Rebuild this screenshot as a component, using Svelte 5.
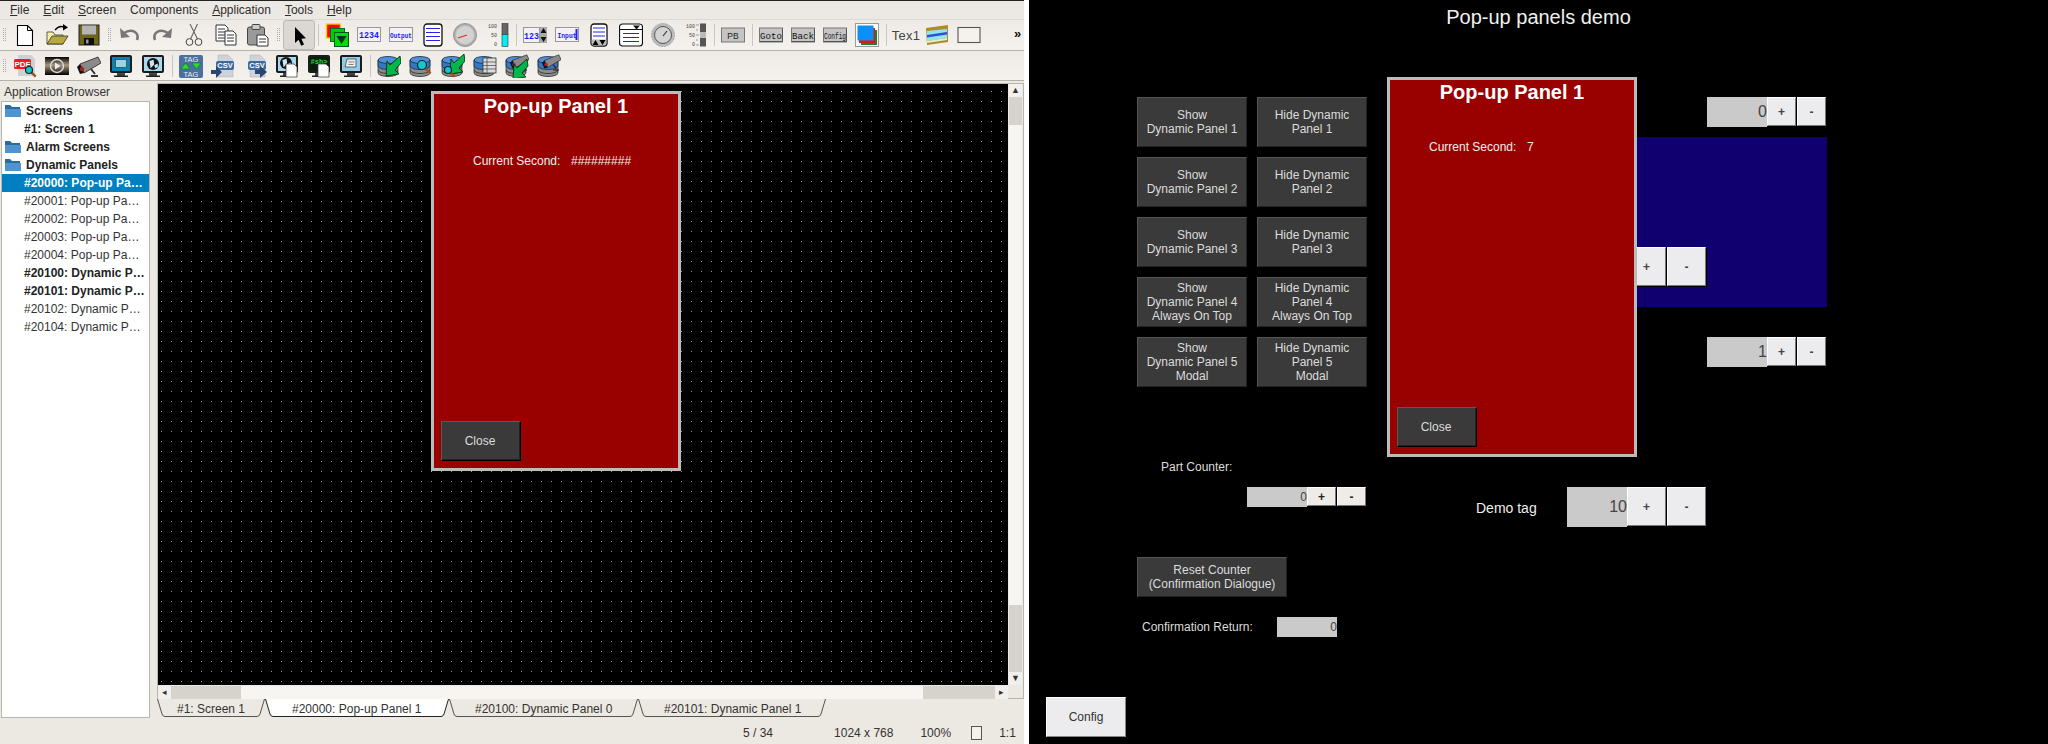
<script>
  const menus = [
    ['F', 'ile'], ['E', 'dit'], ['S', 'creen'], ['', 'Components'],
    ['A', 'pplication'], ['T', 'ools'], ['H', 'elp']
  ];

  const tree = [
    { label: 'Screens', folder: true },
    { label: '#1: Screen 1', bold: true },
    { label: 'Alarm Screens', folder: true },
    { label: 'Dynamic Panels', folder: true },
    { label: '#20000: Pop-up Pa…', bold: true, selected: true },
    { label: '#20001: Pop-up Pa…' },
    { label: '#20002: Pop-up Pa…' },
    { label: '#20003: Pop-up Pa…' },
    { label: '#20004: Pop-up Pa…' },
    { label: '#20100: Dynamic P…', bold: true },
    { label: '#20101: Dynamic P…', bold: true },
    { label: '#20102: Dynamic P…' },
    { label: '#20104: Dynamic P…' }
  ];

  const tabs = [
    { label: '#1: Screen 1', w: 108, pad: 20 },
    { label: '#20000: Pop-up Panel 1', w: 184, pad: 27 },
    { label: '#20100: Dynamic Panel 0', w: 189, pad: 26 },
    { label: '#20101: Dynamic Panel 1', w: 188, pad: 26 }
  ];
  tabs[1].active = true;

  function tabPath(w) {
    return `M0.5 0 L5 15 Q5.7 17.5 8 17.5 H${w - 8} Q${w - 5.7} 17.5 ${w - 5} 15 L${w - 0.5} 0`;
  }

  // the toolbar labels are squeezed into a 24px box, mono glyphs are 0.6em wide
  function squeeze(label, len, fs) {
    return len / (label.length * 0.6 * fs);
  }

  const buttonRows = [
    ['Show\nDynamic Panel 1', 'Hide Dynamic\nPanel 1'],
    ['Show\nDynamic Panel 2', 'Hide Dynamic\nPanel 2'],
    ['Show\nDynamic Panel 3', 'Hide Dynamic\nPanel 3'],
    ['Show\nDynamic Panel 4\nAlways On Top', 'Hide Dynamic\nPanel 4\nAlways On Top'],
    ['Show\nDynamic Panel 5\nModal', 'Hide Dynamic\nPanel 5\nModal']
  ];

  const spinners = [
    { x: 678, y: 97, h: 30, btn: 30, value: 0, size: 'mid' },
    { x: 678, y: 337, h: 30, btn: 30, value: 1, size: 'mid' },
    { x: 538, y: 247, h: 40, btn: 40, value: 0, size: 'mid' },
    { x: 538, y: 487, h: 40, btn: 40, value: 10, size: 'mid' },
    { x: 218, y: 487, h: 20, btn: 30, value: 0, size: 'small' }
  ];
</script>

{#snippet icon(body)}
  <span class="tool"><svg viewBox="0 0 24 24" width="24" height="24">{@render body()}</svg></span>
{/snippet}

{#snippet popup(value)}
  <div class="popup">
    <div class="popup-title">Pop-up Panel 1</div>
    <div class="popup-line"><span class="sec-label">Current Second:</span><span>{value}</span></div>
    <button class="dark close">Close</button>
  </div>
{/snippet}

{#snippet db()}
  <g transform="scale(1.1 1)">
    <path d="M1 6v13a9 3.5 0 0 0 18 0V6z" fill="#8c8c8c" stroke="#333" stroke-width=".8"/>
    <path d="M1 6v6a9 3.5 0 0 0 18 0V6z" fill="#3577c4" stroke="#234" stroke-width=".8"/>
    <path d="M1 16a9 3.5 0 0 0 18 0" fill="none" stroke="#333" stroke-width=".8"/>
    <ellipse cx="10" cy="6" rx="9" ry="3.5" fill="#4d8fd8" stroke="#234" stroke-width=".8"/>
  </g>
{/snippet}

{#snippet greenArrow(dx, dy)}
  <path transform="translate({dx} {dy})" d="M23 2 13 11 10 7 9 22 22 20 18 16 24 9z" fill="#00b84a" stroke="#020" stroke-width=".8"/>
{/snippet}

{#snippet lens(cx, cy, r)}
  <path d="M{cx + r * .7} {cy + r * .7} L{cx + r * 1.9} {cy + r * 1.9}" stroke="#a4501c" stroke-width="2.4"/>
  <circle {cx} {cy} {r} fill="#14c8c8" stroke="#123" stroke-width="1.2"/>
{/snippet}

{#snippet camera(dx, dy, s)}
  <g transform="translate({dx} {dy}) scale({s})">
    <path d="M3 8 21 1l3 6L7 17z" fill="#8a8a8a" stroke="#222" stroke-width=".8"/>
    <path d="M3 8 7 17 3 18 0 11z" fill="#111"/>
    <circle cx="5" cy="13" r="2.2" fill="#a22"/>
    <path d="M14 13 18 18M14 20h7" stroke="#333" stroke-width="2" fill="none"/>
  </g>
{/snippet}

{#snippet monitor(fill)}
  <rect x="1" y="1" width="22" height="18" rx="2" fill="#1c1c1c"/>
  <rect x="3" y="3" width="18" height="14" fill={fill}/>
  <rect x="8" y="19" width="8" height="3" fill="#444"/>
  <rect x="5" y="21.5" width="14" height="1.5" fill="#222"/>
{/snippet}

{#snippet globe(cx, cy, r)}
  <circle {cx} {cy} {r} fill="#111"/>
  <path d="M{cx - r * .6} {cy - r * .5}l{r * .7} {-r * .2} {r * .1} {r * .8} {-r * .6} {r * .6}z M{cx + r * .2} {cy + r * .2}l{r * .6} {-r * .3}v{r * .6}l{-r * .4} {r * .2}z" fill="#cde4f2"/>
{/snippet}

{#snippet minidoc()}
  <path d="M11 10h8l3 3v10H11z" fill="#fff" stroke="#333" stroke-width=".7"/>
{/snippet}

{#snippet csvDoc()}
  <path d="M7 1h10l5 5v17H7z" fill="#cfd3d8" stroke="#aab" stroke-width=".5"/>
  <rect x="5" y="7" width="18" height="9" rx="2" fill="#3c6a9c"/>
  <text x="14" y="14.3" text-anchor="middle" class="svg-bold" font-size="7.5" fill="#fff">CSV</text>
{/snippet}

{#snippet ioBox(label, len, fs)}
  <rect x=".5" y="4.5" width="23" height="14" fill="#f2f2f6" stroke="#999"/>
  <text transform="translate(12 15) scale({squeeze(label, len, fs)} 1)" text-anchor="middle" class="svg-mono" font-size={fs} fill="#1a1aee">{label}</text>
{/snippet}

{#snippet grayBtn(label)}
  <rect x=".5" y="5" width="23" height="14" fill="#c4c4c4" stroke="#777"/>
  <path d="M1 18.5H23.5V5.5" stroke="#555" fill="none"/>
  <text transform="translate(12 15.5) scale({squeeze(label, 22, 9)} 1)" text-anchor="middle" class="svg-mono-plain" font-size="9" fill="#111">{label}</text>
{/snippet}

{#snippet scale()}
  <text x="12" y="5" text-anchor="end" class="svg-mono-plain" font-size="5" fill="#444">100</text>
  <text x="12" y="14" text-anchor="end" class="svg-mono-plain" font-size="5" fill="#444">50</text>
  <text x="12" y="23" text-anchor="end" class="svg-mono-plain" font-size="5" fill="#444">0</text>
{/snippet}

{#snippet iNew()}
  <path d="M4.5 2.5h10l5 5v15h-15z" fill="#fff" stroke="#000" stroke-width="1.1"/><path d="M14.5 2.5v5h5" fill="none" stroke="#000"/>
{/snippet}
{#snippet iOpen()}
  <path d="M2 21V9h6l2 3h8v9z" fill="url(#dith)" stroke="#333" stroke-width=".8"/>
  <path d="M2 21l5-8h16l-5 8z" fill="#b8a93a" stroke="#333" stroke-width=".8"/>
  <path d="M10 7q4-5 9-3" fill="none" stroke="#000" stroke-width="1.4"/><path d="M18 1l5 3.5-5 3z" fill="#000"/>
{/snippet}
{#snippet iSave()}
  <rect x="2" y="2" width="20" height="20" fill="#6b6716" stroke="#222"/>
  <rect x="5" y="2.5" width="14" height="9" fill="#b4b4b4"/>
  <rect x="7" y="15" width="10" height="7" fill="#0c0c0c"/><rect x="9" y="16.5" width="2.5" height="4" fill="#999"/>
{/snippet}
{#snippet iUndo()}
  <path d="M6 10q6-4 11-1 4 3 2 8" fill="none" stroke="#777" stroke-width="2.6"/><path d="M2 5l1 10 9-1z" fill="#777"/>
{/snippet}
{#snippet iRedo()}
  <g transform="matrix(-1 0 0 1 24 0)">{@render iUndo()}</g>
{/snippet}
{#snippet iCut()}
  <path d="M8 1l7.5 15M15.5 1 8.5 16" stroke="#666" stroke-width="1.1" fill="none"/>
  <circle cx="7.5" cy="19" r="3.4" fill="none" stroke="#444"/><circle cx="16.5" cy="19" r="3.4" fill="none" stroke="#444"/>
{/snippet}
{#snippet iCopy()}
  <path d="M2 2h9l3 3v13H2z" fill="#fff" stroke="#333"/><path d="M4 6h7M4 9h7M4 12h7M4 15h7" stroke="#333"/>
  <path d="M11 8h8l3 3v11H11z" fill="#fff" stroke="#333"/><path d="M13 12h7M13 15h7M13 18h7" stroke="#333"/>
{/snippet}
{#snippet iPaste()}
  <rect x="1.5" y="4" width="17" height="18" rx="2" fill="#9a9a9a" stroke="#444"/>
  <rect x="6" y="1.5" width="8" height="5" rx="1" fill="#ccc" stroke="#444"/>
  <path d="M11 12h8l3 3v8H11z" fill="#fff" stroke="#333"/><path d="M13 16h7M13 19h7" stroke="#333"/>
{/snippet}
{#snippet iPointer()}
  <path d="M8 4v16l3.6-3.3 2.6 6 2.8-1.2-2.6-5.8 4.6-.4z" fill="#000"/>
{/snippet}
{#snippet iPanels()}
  <rect x="1.5" y="1" width="14" height="14" fill="#f00" stroke="#fc0" stroke-width="1.4"/>
  <rect x="5.5" y="5.5" width="14" height="13" fill="#0c0" stroke="#063"/>
  <rect x="9.5" y="9.5" width="14" height="14" fill="#0d0" stroke="#052"/>
  <path d="M11.5 13h10l-5 8z" fill="#032"/>
{/snippet}
{#snippet iList()}
  <rect x="3" y="1" width="18" height="22" rx="3" fill="#fff" stroke="#111" stroke-width="1.3"/>
  <path d="M5 5.5h14M5 9.5h14M5 13.5h14M5 17.5h14" stroke="#22e"/>
{/snippet}
{#snippet iGauge()}
  <circle cx="12" cy="12" r="11.5" fill="#aaa" stroke="#999"/><circle cx="12" cy="12" r="9.5" fill="#d2d2d2" stroke="#bbb"/>
  <path d="M5 15l9-3" stroke="#e22" stroke-width="1.2"/>
{/snippet}
{#snippet iBar()}
  {@render scale()}
  <rect x="17" y="0.5" width="6" height="11" fill="#666" stroke="#333" stroke-width=".6"/><rect x="17" y="11.5" width="6" height="12" fill="#0ee" stroke="#333" stroke-width=".6"/>
{/snippet}
{#snippet iSpin()}
  <rect x="0.5" y="4.5" width="16" height="15" fill="#f2f2f6" stroke="#999"/>
  <text transform="translate(8.5 16) scale({squeeze('123', 15, 9)} 1)" text-anchor="middle" class="svg-mono" font-size="9" fill="#1a1aee">123</text>
  <rect x="17" y="4" width="7" height="16" fill="#aaa"/>
  <path d="M20.5 5l3 5h-6zM17.5 14h6l-3 5z" fill="#111"/>
{/snippet}
{#snippet iInput()}
  {@render ioBox('Input', 19, 8)}
  <rect x="20.5" y="6" width="2" height="11" fill="#22e"/>
{/snippet}
{#snippet iListScroll()}
  <rect x="4" y="1" width="16" height="22" rx="3" fill="#fff" stroke="#111" stroke-width="1.3"/>
  <path d="M6 5h12M6 9h12M6 13h12" stroke="#22e"/>
  <path d="M4.700 16.500h14.600v5a2 2 0 0 1-2 1h-10.600a2 2 0 0 1-2-1z" fill="#bbb"/>
  <path d="M5.500 22l3-5 3 5zM12.500 17h6l-3 5z" fill="#000"/>
{/snippet}
{#snippet iCombo()}
  <rect x="0.5" y="1" width="23" height="22" rx="3" fill="#fff" stroke="#111" stroke-width="1.2"/>
  <path d="M1 6.500h22" stroke="#111"/><path d="M14 2.500h7l-3.500 4z" fill="#111"/>
  <path d="M4 10.500h16M4 14.500h16M4 18.500h16" stroke="#22e"/>
{/snippet}
{#snippet iDial()}
  <circle cx="12" cy="12" r="11.5" fill="#bbb" stroke="#aaa" stroke-dasharray="2 1"/><circle cx="12" cy="12" r="8.500" fill="#d4d4d4" stroke="#555"/>
  <path d="M12 13l4-5" stroke="#333" stroke-width="1.2"/>
{/snippet}
{#snippet iSlider()}
  {@render scale()}
  <path d="M13 2h3M13 7h2M13 12h3M13 17h2M13 22h3" stroke="#666" stroke-width=".6"/>
  <rect x="17" y="0.500" width="6" height="23" fill="#555"/><rect x="17" y="9" width="6" height="6" fill="#bbb"/>
{/snippet}
{#snippet iColor()}
  <rect x="0.500" y="0.500" width="23" height="23" fill="#fff" stroke="#999"/>
  <rect x="6" y="7" width="16" height="15" fill="#0a8a30"/><rect x="4" y="5" width="16" height="15" fill="#ee1010"/><rect x="2.500" y="2.500" width="16" height="15" fill="#0a90f8"/>
{/snippet}
{#snippet iImage()}
  <path d="M1 5 23 2v17L2 22z" fill="#b08a2c"/>
  <path d="M2 8 22 6v9L2 18z" fill="#8ce8f0"/><path d="M2 12 22 9v2.500L2 14.500z" fill="#3848d8"/><path d="M2 18 22 15v2L2 20z" fill="#e8f0c0"/>
{/snippet}
{#snippet iRect()}
  <rect x="1" y="4.500" width="22" height="15" fill="#f5f2ee" stroke="#555" stroke-width="1.1"/>
{/snippet}
{#snippet iPdf()}
  <path d="M5 1h13l4 4v17H5z" fill="#cfd0d4"/>
  <rect x="1" y="5" width="17" height="10" rx="1.500" fill="#ee1c1c"/>
  <text x="9.500" y="13" text-anchor="middle" class="svg-bold" font-size="8" fill="#fff">PDF</text>
  {@render lens(16, 16, 3.500)}
{/snippet}
{#snippet iVideo()}
  <defs><linearGradient id="vid" x1="0" y1="0" x2="0" y2="1"><stop offset="0" stop-color="#000"/><stop offset=".45" stop-color="#a89880"/><stop offset="1" stop-color="#000"/></linearGradient></defs>
  <rect x="0" y="3" width="24" height="18" fill="url(#vid)"/>
  <circle cx="12" cy="12" r="6.500" fill="none" stroke="#ddd" stroke-width="1.400"/><path d="M10 8.500v7l5.500-3.500z" fill="#eee"/>
{/snippet}
{#snippet iCamera()}
  {@render camera(0, 2, 1)}
{/snippet}
{#snippet iMonitor()}
  {@render monitor('#0f80b4')}
  <rect x="6.500" y="5.500" width="11" height="8" fill="#9ed0e8" stroke="#134" stroke-width=".6"/>
{/snippet}
{#snippet iMonitorGlobe()}
  {@render monitor('#a8d8ee')}
  {@render globe(12, 10, 6)}
{/snippet}
{#snippet iTag()}
  <rect x="0" y="1" width="24" height="23" rx="2" fill="#4a709c"/>
  <text x="12" y="8" text-anchor="middle" class="svg-plain" font-size="7.500" fill="#e8eef4">TAG</text>
  <text x="12" y="22.500" text-anchor="middle" class="svg-plain" font-size="7.500" fill="#e8eef4">TAG</text>
  <path d="M2 15h9l-4.500-6zM13 9h9l-4.500 6z" fill="#2be020" stroke="#063" stroke-width=".5"/>
{/snippet}
{#snippet iCsvIn()}
  {@render csvDoc()}
  <path d="M0 16h5v-4l6 6-6 6v-4H0z" fill="#27476e"/>
{/snippet}
{#snippet iCsvOut()}
  {@render csvDoc()}
  <path d="M12 16h5v-4l7 6-7 6v-4h-5z" fill="#27476e"/>
{/snippet}
{#snippet iRemoteWeb()}
  {@render monitor('#a8d8ee')}
  {@render globe(11, 9, 6)}
  {@render minidoc()}
{/snippet}
{#snippet iSh()}
  {@render monitor('#06200c')}
  <text transform="translate(3.500 10) scale({squeeze('#sh>', 17, 7)} 1)" class="svg-mono" font-size="7" fill="#2cd43c">#sh&gt;</text>
  {@render minidoc()}
{/snippet}
{#snippet iReport()}
  {@render monitor('#8fcde8')}
  <path d="M8 5h9v8H6z" fill="#eee" stroke="#333" stroke-width=".7"/><path d="M9.500 8h6M9.500 10.500h5" stroke="#555" stroke-width=".7"/>
{/snippet}
{#snippet iDbArrow()}
  {@render db()}
  {@render greenArrow(0, 0)}
{/snippet}
{#snippet iDbSearch()}
  {@render db()}
  {@render lens(13, 11, 4.500)}
{/snippet}
{#snippet iDbSearchArrow()}
  {@render db()}
  {@render greenArrow(0, -2)}
  {@render lens(7, 16, 3.500)}
{/snippet}
{#snippet iDbTable()}
  {@render db()}
  <rect x="10" y="4" width="13" height="15" fill="#ddd" stroke="#333" stroke-width=".8"/><path d="M10 8h13M10 11.500h13M10 15h13M14 4v15" stroke="#444" stroke-width=".7"/>
{/snippet}
{#snippet iDbCamArrow()}
  {@render db()}
  {@render camera(5, 0, .8)}
  {@render greenArrow(-1, 3)}
{/snippet}
{#snippet iDbCam()}
  {@render db()}
  {@render camera(5, 0, .8)}
{/snippet}

<div class="page">
  <section class="designer">
    <nav class="menubar">
      {#each menus as [mark, rest]}
        <span class="menu"><u>{mark}</u>{rest}</span>
      {/each}
    </nav>

    <div class="toolbar row1">
      <i class="grip"></i>
      {@render icon(iNew)}{@render icon(iOpen)}{@render icon(iSave)}
      <i class="grip"></i>
      {@render icon(iUndo)}{@render icon(iRedo)}{@render icon(iCut)}{@render icon(iCopy)}{@render icon(iPaste)}
      <i class="grip"></i>
      <span class="tool pressed"><svg viewBox="0 0 24 24" width="24" height="24">{@render iPointer()}</svg></span>
      <i class="sep"></i>
      {@render icon(iPanels)}
      <span class="tool"><svg viewBox="0 0 24 24" width="24" height="24">{@render ioBox('1234', 20, 9)}</svg></span>
      <span class="tool"><svg viewBox="0 0 24 24" width="24" height="24">{@render ioBox('Output', 22, 8)}</svg></span>
      {@render icon(iList)}{@render icon(iGauge)}{@render icon(iBar)}
      <i class="sep"></i>
      {@render icon(iSpin)}{@render icon(iInput)}{@render icon(iListScroll)}{@render icon(iCombo)}{@render icon(iDial)}{@render icon(iSlider)}
      <i class="sep"></i>
      <span class="tool"><svg viewBox="0 0 24 24" width="24" height="24">
        <rect x=".5" y="5" width="23" height="14" fill="#c4c4c4" stroke="#777"/>
        <text x="12" y="15.500" text-anchor="middle" class="svg-plain" font-size="8.500" fill="#222">PB</text>
      </svg></span>
      <i class="sep"></i>
      <span class="tool"><svg viewBox="0 0 24 24" width="24" height="24">{@render grayBtn('Goto')}</svg></span>
      <span class="tool"><svg viewBox="0 0 24 24" width="24" height="24">{@render grayBtn('Back')}</svg></span>
      <span class="tool"><svg viewBox="0 0 24 24" width="24" height="24">{@render grayBtn('Config')}</svg></span>
      {@render icon(iColor)}
      <i class="sep"></i>
      <span class="tool text-tool">Tex1</span>
      {@render icon(iImage)}{@render icon(iRect)}
      <span class="more">»</span>
    </div>

    <div class="toolbar row2">
      <i class="grip"></i>
      {@render icon(iPdf)}{@render icon(iVideo)}{@render icon(iCamera)}{@render icon(iMonitor)}{@render icon(iMonitorGlobe)}
      <i class="sep"></i>
      {@render icon(iTag)}{@render icon(iCsvIn)}{@render icon(iCsvOut)}{@render icon(iRemoteWeb)}{@render icon(iSh)}{@render icon(iReport)}
      <i class="sep"></i>
      {@render icon(iDbArrow)}{@render icon(iDbSearch)}{@render icon(iDbSearchArrow)}{@render icon(iDbTable)}{@render icon(iDbCamArrow)}{@render icon(iDbCam)}
    </div>

    <div class="workspace">
      <aside class="browser">
        <div class="browser-title">Application Browser</div>
        <ul class="tree">
          {#each tree as node}
            <li class:bold={node.bold || node.folder} class:selected={node.selected} class:folder={node.folder}>
              {#if node.folder}
                <svg class="folder-icon" viewBox="0 0 16 13" width="16" height="13">
                  <path d="M0 1h5l2 2h8v10H0z" fill="#2c6b9e"/><path d="M0 5h16v8H0z" fill="#4f94cf"/>
                </svg>
              {/if}
              {node.label}
            </li>
          {/each}
        </ul>
      </aside>

      <div class="editor">
        <div class="scrollframe">
          <div class="canvas">
            <div class="canvas-panel">{@render popup('#########')}</div>
          </div>
          <div class="vbar">
            <span class="sb-arrow">▲</span>
            <span class="sb-trough v1"></span>
            <span class="sb-thumb"></span>
            <span class="sb-trough v2"></span>
            <span class="sb-arrow">▼</span>
          </div>
          <div class="hbar">
            <span class="sb-arrow">◂</span>
            <span class="sb-trough h1"></span>
            <span class="sb-thumb"></span>
            <span class="sb-trough h2"></span>
            <span class="sb-arrow">▸</span>
          </div>
        </div>
        <div class="tabs">
          {#each tabs as tab}
            <div class="tab" class:active={tab.active} style="width:{tab.w}px;padding-left:{tab.pad}px">
              <svg class="tab-shape" width={tab.w} height="19" viewBox="0 0 {tab.w} 19">
                <path d={tabPath(tab.w)} fill={tab.active ? '#fff' : 'none'} stroke={tab.active ? '#222' : '#555'} />
              </svg>
              <span class="tab-label">{tab.label}</span>
            </div>
          {/each}
        </div>
      </div>
    </div>

    <footer class="status">
      <span class="s1">5 / 34</span>
      <span class="s2">1024 x 768</span>
      <span class="s3">100%</span>
      <i class="s-icon"></i>
      <span class="s4">1:1</span>
    </footer>
  </section>

  <div class="gutter"></div>

  <section class="screen">
    <h1>Pop-up panels demo</h1>

    <div class="button-grid">
      {#each buttonRows as row}
        {#each row as text}
          <button class="dark">{text}</button>
        {/each}
      {/each}
    </div>

    <div class="blue-panel"></div>

    {#each spinners as s}
      <div class="spinner {s.size}" style="left:{s.x}px;top:{s.y}px;height:{s.h}px">
        <span class="value">{s.value}</span>
        <button class="step" style="width:{s.btn - 1}px;height:{s.h - 1}px"><b>+</b></button>
        <button class="step" style="width:{s.btn - 1}px;height:{s.h - 1}px"><b>-</b></button>
      </div>
    {/each}

    <div class="screen-panel">{@render popup('7')}</div>

    <span class="label part-label">Part Counter:</span>
    <span class="label demo-label">Demo tag</span>
    <button class="dark reset">Reset Counter
(Confirmation Dialogue)</button>
    <span class="label confirm-label">Confirmation Return:</span>
    <div class="spinner small confirm-value"><span class="value">0</span></div>
    <button class="config">Config</button>
  </section>

  <svg class="defs" width="0" height="0">
    <defs>
      <pattern id="dith" width="2" height="2" patternUnits="userSpaceOnUse">
        <rect width="2" height="2" fill="#f2ec50"/><rect width="1" height="1" fill="#fff"/><rect x="1" y="1" width="1" height="1" fill="#fff"/>
      </pattern>
    </defs>
  </svg>
</div>

<style>
  :global(body) {
    margin: 0;
    background: #000;
    font-family: "Liberation Sans", Arial, sans-serif;
    font-size: 12px;
  }

  .page {
    display: flex;
    width: 2048px;
    height: 744px;
    overflow: hidden;
    background: #000;
  }

  .designer {
    width: 1024px;
    height: 744px;
    flex: none;
    display: flex;
    flex-direction: column;
    background: #ece8e2;
    color: #2e2e2e;
    box-sizing: border-box;
    border-top: 1px solid #222;
  }

  .gutter {
    width: 5px;
    flex: none;
    background: #fff;
  }

  .menubar {
    height: 18px;
    display: flex;
    align-items: center;
    padding-left: 3px;
    border-bottom: 1px solid #dcd8d2;
    background: #ece8e3;
  }

  .menu {
    padding: 0 7px;
    line-height: 18px;
  }

  .menu u {
    text-underline-offset: 1px;
  }

  .toolbar {
    display: flex;
    align-items: center;
    position: relative;
    background: linear-gradient(#eeeae5, #f5f2ee);
    border-bottom: 1px solid #b4b1ac;
  }

  .row1 { height: 30px; }
  .row2 { height: 29px; }

  .tool {
    width: 32px;
    height: 100%;
    flex: none;
    display: flex;
    align-items: center;
    justify-content: center;
    box-sizing: border-box;
  }

  .pressed {
    background: #dbd8d3;
    border: 1px solid #bdbab5;
    border-radius: 3px;
  }

  .grip {
    width: 9px;
    height: 14px;
    flex: none;
    background-image: radial-gradient(circle at .5px .5px, #aaa .5px, transparent .6px);
    background-size: 2px 2px;
    background-position: 3px 0;
    background-repeat: repeat;
    background-clip: content-box;
    padding: 0 2px;
    box-sizing: border-box;
  }

  .sep {
    width: 6px;
    height: 22px;
    flex: none;
    background: linear-gradient(#c9c6c1, #c9c6c1) center / 1px 100% no-repeat;
  }

  .text-tool {
    font-size: 13px;
    color: #444;
    margin-left: 1px;
    margin-right: -1px;
    letter-spacing: .3px;
  }

  .more {
    position: absolute;
    left: 1014px;
    top: 6px;
    font-size: 13px;
    font-weight: bold;
    color: #111;
  }

  .svg-bold { font-family: "Liberation Sans", sans-serif; font-weight: bold; }
  .svg-plain { font-family: "Liberation Sans", sans-serif; }
  .svg-mono { font-family: "Liberation Mono", monospace; font-weight: bold; }
  .svg-mono-plain { font-family: "Liberation Mono", monospace; }

  .workspace {
    flex: 1;
    min-height: 0;
    display: flex;
    padding-top: 2px;
  }

  .browser {
    width: 157px;
    flex: none;
    display: flex;
    flex-direction: column;
    padding: 0 0 2px 1px;
    box-sizing: border-box;
  }

  .browser-title {
    height: 18px;
    line-height: 18px;
    padding-left: 3px;
    color: #333;
  }

  .tree {
    list-style: none;
    margin: 0;
    padding: 0;
    width: 149px;
    flex: 1;
    background: #fff;
    border: 1px solid #b8b5b0;
    box-sizing: border-box;
  }

  .tree li {
    height: 18px;
    line-height: 18px;
    padding-left: 22px;
    white-space: nowrap;
    position: relative;
    color: #333;
  }

  .tree li.bold {
    font-weight: bold;
    color: #222;
  }

  .tree li.folder {
    padding-left: 24px;
  }

  .tree li.selected {
    background: #0080c0;
    color: #fff;
  }

  .folder-icon {
    position: absolute;
    left: 3px;
    top: 2px;
  }

  .editor {
    flex: 1;
    display: flex;
    flex-direction: column;
    min-width: 0;
  }

  .scrollframe {
    display: grid;
    grid-template-columns: 850px 14px;
    grid-template-rows: 601px 14px;
    border: 1px solid #b8b5b0;
    height: 616px;
    box-sizing: border-box;
    width: 867px;
    background: #ece8e2;
  }

  .canvas {
    position: relative;
    overflow: hidden;
    background-color: #000;
    background-image: radial-gradient(circle at .5px .5px, #a0a0a0 .5px, transparent .6px);
    background-size: 10px 10px;
    background-position: 3px 7px;
  }

  .canvas-panel {
    position: absolute;
    left: 273px;
    top: 7px;
  }

  .vbar,
  .hbar {
    display: flex;
    background: #d6d2cc;
  }

  .vbar {
    flex-direction: column;
    width: 13px;
    margin-left: 1px;
  }

  .hbar {
    height: 13px;
    margin-top: 1px;
  }

  .sb-arrow {
    flex: none;
    width: 13px;
    height: 13px;
    font-size: 9px;
    line-height: 13px;
    text-align: center;
    color: #333;
    background: #f2f0ec;
    overflow: hidden;
  }

  .sb-thumb {
    flex: 1;
    background: #f7f5f2;
  }

  .sb-trough { flex: none; background: #d6d2cc; }
  .v1 { height: 28px; }
  .v2 { height: 67px; }
  .h1 { width: 70px; }
  .h2 { width: 72px; }

  .tabs {
    display: flex;
    height: 19px;
  }

  .tab {
    position: relative;
    flex: none;
    box-sizing: border-box;
    line-height: 20px;
    color: #333;
  }

  .tab-shape {
    position: absolute;
    left: 0;
    top: 0;
  }

  .tab-label {
    position: relative;
    white-space: nowrap;
  }

  .status {
    height: 24px;
    position: relative;
    display: flex;
    align-items: center;
    color: #333;
    padding: 2px 0 0 743px;
    box-sizing: border-box;
  }

  .s2 { margin-left: 61px; }
  .s3 { margin-left: 27px; }
  .s4 { margin-left: 17px; }

  .s-icon {
    width: 9px;
    height: 12px;
    margin-left: 20px;
    border: 1px solid #555;
    background: #f4f1ec;
  }

  .popup {
    width: 250px;
    height: 380px;
    box-sizing: border-box;
    border: 3px solid #bbb;
    background: #990000;
    padding: 0 7px 7px;
    display: flex;
    flex-direction: column;
    align-items: flex-start;
    color: #eee;
  }

  .popup-title {
    align-self: stretch;
    text-align: center;
    font-size: 20px;
    font-weight: bold;
    line-height: 24px;
    color: #fff;
  }

  .popup-line {
    margin-top: 36px;
    padding-left: 32px;
    line-height: 14px;
    display: flex;
  }

  .sec-label {
    width: 98px;
    flex: none;
  }

  button {
    font: inherit;
    margin: 0;
    padding: 0;
    cursor: pointer;
  }

  .dark {
    display: block;
    box-sizing: border-box;
    background: #3a3a3a;
    color: #dcdcdc;
    white-space: pre-line;
    line-height: 14px;
    text-align: center;
    border: 1px solid;
    border-color: #555 #222 #222 #555;
  }

  .close {
    width: 80px;
    height: 40px;
    margin-top: auto;
    padding-right: 2px;
    border-color: #5a5a5a #000 #000 #5a5a5a;
    box-shadow: inset -1px -1px 0 #222;
  }

  .screen {
    position: relative;
    flex: 1;
    background: #000;
    color: #e4e4e4;
  }

  h1 {
    margin: 0;
    padding-top: 5px;
    text-align: center;
    font-size: 20px;
    font-weight: normal;
    line-height: 24px;
    color: #f0f0f0;
  }

  .button-grid {
    position: absolute;
    left: 108px;
    top: 97px;
    display: grid;
    grid-template-columns: 110px 110px;
    grid-auto-rows: 50px;
    gap: 10px;
  }

  .blue-panel {
    position: absolute;
    left: 558px;
    top: 137px;
    width: 240px;
    height: 170px;
    background: #10006f;
  }

  .spinner {
    position: absolute;
    display: flex;
    align-items: flex-start;
  }

  .value {
    width: 60px;
    height: 100%;
    box-sizing: border-box;
    background: #cacaca;
    color: #444;
    text-align: right;
    display: flex;
    align-items: center;
    justify-content: flex-end;
  }

  .mid .value { font-size: 16px; }
  .small .value { font-size: 12px; }

  .step {
    flex: none;
    margin-right: 1px;
    box-sizing: border-box;
    background: #ececee;
    color: #444;
    font-size: 12px;
    line-height: 1;
    border: 1px solid;
    border-color: #fff #777 #777 #fff;
    box-shadow: 1px 1px 0 #000;
  }

  .small .step {
    background: #efebe6;
    color: #222;
  }

  .screen-panel {
    position: absolute;
    left: 358px;
    top: 77px;
  }

  .label {
    position: absolute;
    line-height: 14px;
    white-space: nowrap;
    color: #dcdcdc;
  }

  .part-label { left: 132px; top: 460px; }
  .demo-label { left: 447px; top: 499px; font-size: 14px; line-height: 18px; color: #eee; }
  .confirm-label { left: 113px; top: 620px; }

  .reset {
    position: absolute;
    left: 108px;
    top: 557px;
    width: 150px;
    height: 40px;
  }

  .confirm-value {
    left: 248px;
    top: 617px;
    height: 20px;
  }

  .config {
    position: absolute;
    left: 17px;
    top: 697px;
    width: 80px;
    height: 40px;
    box-sizing: border-box;
    background: #ececee;
    color: #333;
    border: 1px solid;
    border-color: #fff #888 #888 #fff;
  }

  .defs {
    position: absolute;
  }
</style>
